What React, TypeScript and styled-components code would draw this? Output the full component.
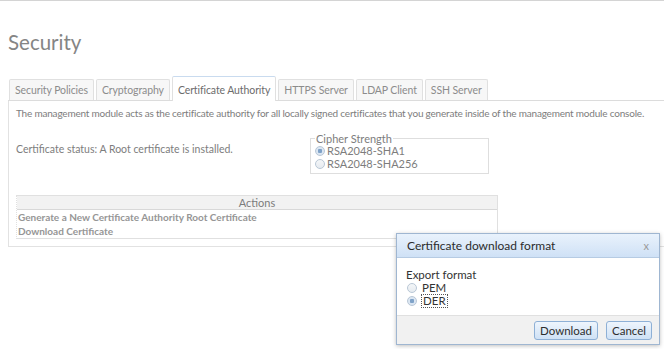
import React from 'react'
import styled, { createGlobalStyle } from 'styled-components'

const GlobalStyle = createGlobalStyle`
  html, body {
    margin: 0;
    padding: 0;
    background: #fff;
  }
  body {
    font-family: Lato, "Open Sans", sans-serif;
    font-size: 10px;
    color: #7d7d7d;
  }
`

const tabs = [
  'Security Policies',
  'Cryptography',
  'Certificate Authority',
  'HTTPS Server',
  'LDAP Client',
  'SSH Server',
]

const actions = [
  'Generate a New Certificate Authority Root Certificate',
  'Download Certificate',
]

export default function App() {
  return (
    <>
      <GlobalStyle />
      <Page>
        <Title>Security</Title>
        <TabBar>
          {tabs.map((t) => (
            <Tab key={t} active={t === 'Certificate Authority'}>{t}</Tab>
          ))}
        </TabBar>
        <Panel>
          <Description>
            The management module acts as the certificate authority for all locally signed certificates that you generate inside of the management module console.
          </Description>
          <StatusRow>
            <Status>Certificate status: A Root certificate is installed.</Status>
            <Fieldset>
              <Legend>Cipher Strength</Legend>
              <RadioRow>
                <Radio checked />RSA2048-SHA1
              </RadioRow>
              <RadioRow>
                <Radio />RSA2048-SHA256
              </RadioRow>
            </Fieldset>
          </StatusRow>
          <ActionsTable>
            <ActionsHead>Actions</ActionsHead>
            {actions.map((a) => (
              <ActionRow key={a}>{a}</ActionRow>
            ))}
          </ActionsTable>
        </Panel>

        <Dialog>
          <DialogTitle>
            <span>Certificate download format</span>
            <Close>x</Close>
          </DialogTitle>
          <DialogBody>
            <FieldLabel>Export format</FieldLabel>
            <DialogOption>
              <Radio />PEM
            </DialogOption>
            <DialogOption>
              <Radio checked /><Focused>DER</Focused>
            </DialogOption>
          </DialogBody>
          <DialogFooter>
            <Button>Download</Button>
            <Button>Cancel</Button>
          </DialogFooter>
        </Dialog>
      </Page>
    </>
  )
}

const Page = styled.div`
  position: relative;
  height: 349px;
  box-sizing: border-box;
  border-top: 1px solid #d4d4d4;
  padding-left: 8px;
  overflow: hidden;
`

const Title = styled.h1`
  margin: 26px 0 0 0;
  font-size: 20.5px;
  font-weight: 400;
  line-height: 30px;
  color: #858585;
`

const TabBar = styled.div`
  display: flex;
  align-items: flex-end;
  gap: 2px;
  margin-top: 19px;
  padding-left: 1px;
  border-bottom: 1px solid #dcdcdc;
`

const Tab = styled.div<{ active?: boolean }>`
  box-sizing: border-box;
  height: ${(p) => (p.active ? '25px' : '21px')};
  padding: 0 5px;
  display: flex;
  align-items: center;
  padding-top: ${(p) => (p.active ? '2px' : '0')};
  font-size: 10.5px;
  letter-spacing: -0.1px;
  color: ${(p) => (p.active ? '#6c6c6c' : '#8c8c8c')};
  background: ${(p) => (p.active ? '#fff' : '#f7f7f7')};
  border: 1px solid #e0e0e0;
  border-top-color: ${(p) => (p.active ? '#c9dbef' : '#e0e0e0')};
  border-bottom: none;
  border-radius: 2px 2px 0 0;
  margin-bottom: ${(p) => (p.active ? '-1px' : '0')};
`

const Panel = styled.div`
  height: 140px;
  border-left: 1px solid #e2e2e2;
  border-bottom: 1px solid #e2e2e2;
  padding: 5px 0 0 7px;
`

const Description = styled.div`
  line-height: 14px;
  white-space: nowrap;
  letter-spacing: -0.2px;
`

const StatusRow = styled.div`
  display: flex;
  align-items: flex-start;
  margin-top: 13px;
`

const Status = styled.div`
  width: 294px;
  margin-top: 10px;
  font-size: 10.5px;
`

const Fieldset = styled.fieldset`
  width: 173px;
  margin: 0;
  padding: 0 0 3px 4px;
  border: 1px solid #dedede;
`

const Legend = styled.legend`
  padding: 0 1px;
  font-size: 11px;
  line-height: 11px;
`

const RadioRow = styled.div`
  display: flex;
  align-items: center;
  height: 13px;
  line-height: 13px;
  font-size: 11px;
`

const Radio = styled.span<{ checked?: boolean }>`
  box-sizing: border-box;
  width: 10px;
  height: 10px;
  margin-right: 2px;
  border-radius: 50%;
  border: 1px solid #b9c7d6;
  background: ${(p) =>
    p.checked
      ? 'radial-gradient(circle, #7fa2c8 0 2px, #dbe6f2 2.5px)'
      : 'linear-gradient(#f4f6f8, #e6ebf0)'};
  flex-shrink: 0;
`

const ActionsTable = styled.div`
  width: 480px;
  margin-top: 21px;
  border: 1px solid #e0e0e0;
  border-left-style: dotted;
`

const ActionsHead = styled.div`
  height: 13px;
  line-height: 13px;
  text-align: center;
  background: #f2f2f2;
  border-bottom: 1px solid #d8d8d8;
  font-size: 11px;
  color: #7c7c7c;
`

const ActionRow = styled.div`
  height: 14px;
  line-height: 14px;
  padding-left: 1px;
  font-weight: 700;
  color: #969696;
`

const Dialog = styled.div`
  position: absolute;
  left: 396px;
  top: 232px;
  width: 264px;
  height: 112px;
  box-sizing: border-box;
  display: flex;
  flex-direction: column;
  background: #fff;
  border: 1px solid #9fb6d1;
  box-shadow: 0 1px 4px rgba(0, 0, 0, 0.25);
  font-size: 11.5px;
  color: #333;
`

const DialogTitle = styled.div`
  height: 23px;
  display: flex;
  align-items: center;
  justify-content: space-between;
  padding: 0 10px 0 10px;
  background: linear-gradient(#e9f2fc, #cfe1f6);
  border-bottom: 1px solid #b6cbe3;
  font-size: 12px;
  color: #2c2c2c;
`

const Close = styled.span`
  color: #9a9a9a;
  font-size: 11px;
`

const DialogBody = styled.div`
  flex: 1;
  padding: 10px 0 0 9px;
`

const FieldLabel = styled.div`
  line-height: 13px;
`

const DialogOption = styled.div`
  display: flex;
  align-items: center;
  height: 13px;
  line-height: 13px;
  padding-left: 1px;
  gap: 3px;
`

const Focused = styled.span`
  outline: 1px dotted #555;
  line-height: 12px;
  padding: 0 1px;
`

const DialogFooter = styled.div`
  height: 28px;
  display: flex;
  align-items: center;
  justify-content: flex-end;
  gap: 8px;
  padding-right: 7px;
  background: #f1f1f1;
  border-top: 1px solid #e0e0e0;
`

const Button = styled.button`
  height: 19px;
  padding: 0 5px;
  font-family: inherit;
  font-size: 11.5px;
  color: #2d2d2d;
  background: linear-gradient(#eef5fd, #cfe1f5);
  border: 1px solid #8eb0d6;
  border-radius: 3px;
`
